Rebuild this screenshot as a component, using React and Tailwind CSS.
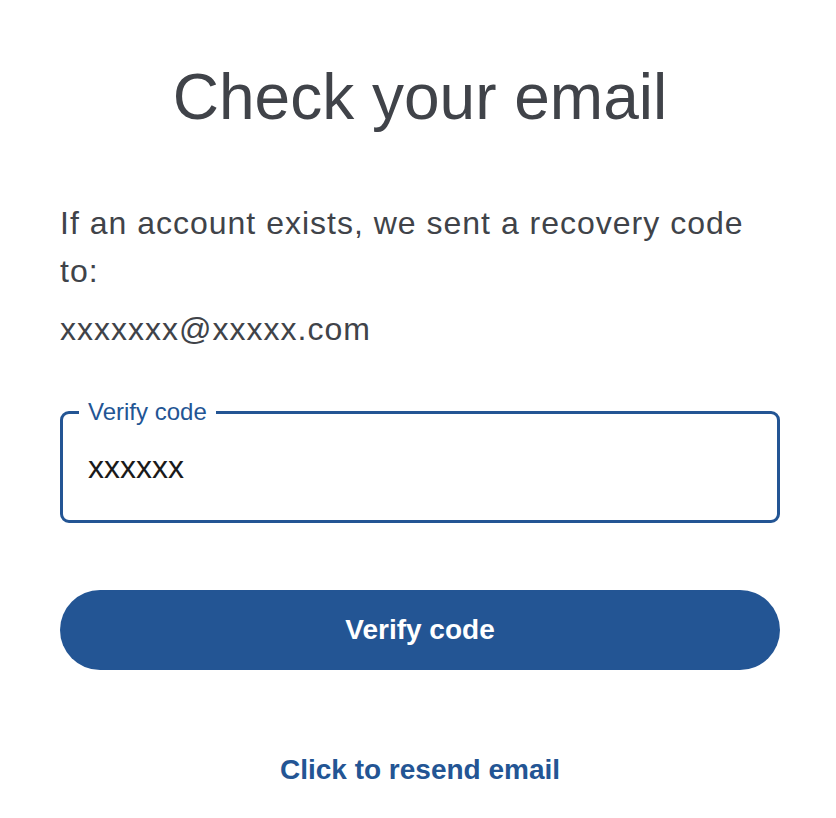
export default function App() {
  return (
    <div className="w-[836px] min-h-[818px] bg-white pl-[60px] pr-[56px] pt-[59px] font-['Liberation_Sans',Arial,sans-serif]">
      <h1 className="text-center text-[64px] leading-[77px] text-[#404349]">Check your email</h1>

      <p className="mt-[63px] text-[32px] leading-[48px] tracking-[1px] text-[#404349]">
        If an account exists, we sent a recovery code to:
      </p>
      <p className="mt-[10px] text-[32px] leading-[48px] tracking-[1px] text-[#404349]">xxxxxxx@xxxxx.com</p>

      <div className="relative mt-[58px] flex h-[112px] items-center rounded-[9px] border-[3px] border-[#235594] px-[25px]">
        <span className="absolute -top-[17px] left-[16px] bg-white px-[9px] text-[24px] leading-[30px] text-[#235594]">
          Verify code
        </span>
        <span className="text-[32px] text-[#1a1a1a]">xxxxxx</span>
      </div>

      <button className="mt-[67px] flex h-[80px] w-full items-center justify-center rounded-full bg-[#235594] text-[28px] font-bold text-white">
        Verify code
      </button>

      <div className="mt-[84px] text-center">
        <a href="#" className="text-[28px] font-bold leading-[32px] text-[#235594]">
          Click to resend email
        </a>
      </div>
    </div>
  );
}
